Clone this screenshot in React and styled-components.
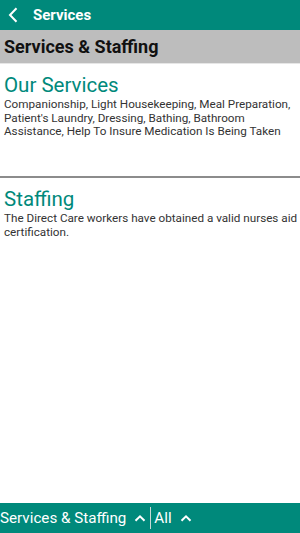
import React from "react";
import styled, { createGlobalStyle } from "styled-components";

const Global = createGlobalStyle`
  html, body { margin: 0; padding: 0; background: #fff; }
  body { font-family: Roboto, "Noto Sans", sans-serif; }
  #root { width: 300px; height: 533px; }
`;

const Screen = styled.div`
  width: 300px;
  height: 533px;
  display: flex;
  flex-direction: column;
  background: #fff;
  overflow: hidden;
`;

const TopBar = styled.div`
  height: 30px;
  flex: none;
  background: #00897b;
  display: flex;
  align-items: center;
  color: #fff;
`;

const BackIcon = styled.svg`
  width: 10px;
  height: 16px;
  margin-left: 8px;
  margin-right: 15px;
`;

const TopTitle = styled.div`
  font-family: Roboto, sans-serif;
  font-weight: 700;
  font-size: 15px;
`;

const SectionHeader = styled.div`
  height: 33px;
  flex: none;
  background: #bdbdbd;
  display: flex;
  align-items: center;
  padding-left: 4px;
  font-family: Roboto, sans-serif;
  font-weight: 700;
  font-size: 18px;
  color: #111;
  border-bottom: 1px solid #e6e6e6;
`;

const Content = styled.div`
  flex: 1;
  display: flex;
  flex-direction: column;
`;

const Block = styled.div`
  padding: 9px 0 0 4px;
  min-height: ${(p) => p.$minH || 0}px;
  box-sizing: border-box;
  border-bottom: ${(p) => (p.$divider ? "2px solid #8c8c8c" : "none")};
`;

const Heading = styled.div`
  font-family: Roboto, sans-serif;
  font-size: 20.5px;
  color: #00897b;
  line-height: 24px;
`;

const Body = styled.div`
  font-family: Roboto, sans-serif;
  font-size: 11.7px;
  line-height: 13.5px;
  color: #333;
  margin-top: 1px;
  padding-right: 2px;
`;

const BottomBar = styled.div`
  height: 30px;
  flex: none;
  background: #00897b;
  display: flex;
  align-items: center;
  color: #fff;
  font-family: Roboto, sans-serif;
  font-size: 15.2px;
`;

const BottomItem = styled.div`
  display: flex;
  align-items: center;
  height: 100%;
  padding-left: ${(p) => p.$pl || 0}px;
`;

const Chevron = styled.svg`
  width: 12px;
  height: 8px;
  margin-left: ${(p) => p.$ml}px;
  margin-right: ${(p) => p.$mr}px;
`;

const VDivider = styled.div`
  width: 1px;
  height: 22px;
  background: #c8d8d5;
`;

const Up = ({ ml, mr }) => (
  <Chevron viewBox="0 0 12 8" $ml={ml} $mr={mr}>
    <path d="M1.5 6.8 L6 2.3 L10.5 6.8" fill="none" stroke="#fff" strokeWidth="2" />
  </Chevron>
);

export default function App() {
  return (
    <>
      <Global />
      <Screen>
        <TopBar>
          <BackIcon viewBox="0 0 10 16">
            <path d="M8.5 1.2 L2 8 L8.5 14.8" fill="none" stroke="#fff" strokeWidth="2" />
          </BackIcon>
          <TopTitle>Services</TopTitle>
        </TopBar>
        <SectionHeader>Services &amp; Staffing</SectionHeader>
        <Content>
          <Block $minH={114} $divider>
            <Heading>Our Services</Heading>
            <Body>
              Companionship, Light Housekeeping, Meal Preparation, Patient's Laundry, Dressing, Bathing, Bathroom
              Assistance, Help To Insure Medication Is Being Taken
            </Body>
          </Block>
          <Block>
            <Heading>Staffing</Heading>
            <Body>The Direct Care workers have obtained a valid nurses aid certification.</Body>
          </Block>
        </Content>
        <BottomBar>
          <BottomItem>
            Services &amp; Staffing
            <Up ml={8} mr={4} />
          </BottomItem>
          <VDivider />
          <BottomItem $pl={3}>
            All
            <Up ml={8} mr={0} />
          </BottomItem>
        </BottomBar>
      </Screen>
    </>
  );
}
